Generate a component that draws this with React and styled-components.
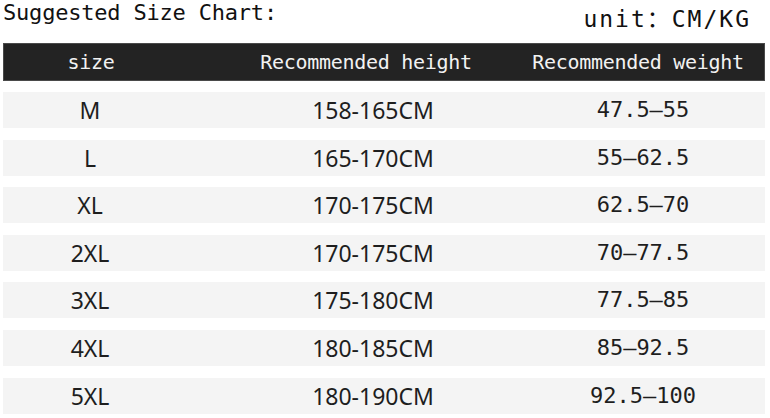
import React from 'react'
import styled, { createGlobalStyle } from 'styled-components'

const rows = [
  { size: 'M', height: '158-165CM', weight: '47.5—55' },
  { size: 'L', height: '165-170CM', weight: '55—62.5' },
  { size: 'XL', height: '170-175CM', weight: '62.5—70' },
  { size: '2XL', height: '170-175CM', weight: '70—77.5' },
  { size: '3XL', height: '175-180CM', weight: '77.5—85' },
  { size: '4XL', height: '180-185CM', weight: '85—92.5' },
  { size: '5XL', height: '180-190CM', weight: '92.5—100' },
]

const App = () => {
  return (
    <Page>
      <GlobalStyle />
      <TopBar>
        <Title>Suggested Size Chart:</Title>
        <Unit>unit：CM/KG</Unit>
      </TopBar>

      <Table>
        <HeaderRow>
          <HeadCell>size</HeadCell>
          <HeadCell $shift={58 - 16}>Recommended height</HeadCell>
          <HeadCell>Recommended weight</HeadCell>
        </HeaderRow>

        <Body>
          {rows.map(row => (
            <Row key={row.size}>
              <Cell>{row.size}</Cell>
              <Cell $shift={58}>{row.height}</Cell>
              <Cell $shift={10} $mono>
                {row.weight}
              </Cell>
            </Row>
          ))}
        </Body>
      </Table>
    </Page>
  )
}

export default App

const GlobalStyle = createGlobalStyle`
  html, body {
    margin: 0;
    padding: 0;
    background: #ffffff;
  }
`

const Page = styled.div`
  width: 770px;
  height: 418px;
  padding: 0 5px 0 3px;
  box-sizing: border-box;
  overflow: hidden;
  background: #ffffff;
`

const TopBar = styled.div`
  display: flex;
  justify-content: space-between;
  align-items: flex-start;
  height: 26px;
`

const Title = styled.h1`
  margin: 0;
  font-family: 'DejaVu Sans Mono', monospace;
  font-weight: normal;
  font-size: 22px;
  line-height: 26px;
  letter-spacing: -0.2px;
  color: #111;
`

const Unit = styled.div`
  margin-top: 6px;
  margin-right: 14px;
  font-family: 'DejaVu Sans Mono', 'Noto Sans CJK SC', monospace;
  font-size: 23px;
  line-height: 26px;
  letter-spacing: 2px;
  color: #111;
`

const Table = styled.div`
  margin-top: 17px;
  display: flex;
  flex-direction: column;
  gap: 11px;
`

const HeaderRow = styled.div`
  display: grid;
  grid-template-columns: 174px 334px 1fr;
  align-items: center;
  height: 38px;
  box-sizing: border-box;
  background: #232323;
  border: 1px solid #4a4a4a;
  color: #f2f2f2;
`

const HeadCell = styled.div`
  text-align: center;
  padding-left: ${p => p.$shift || 0}px;
  font-family: 'DejaVu Sans Mono', monospace;
  font-size: 20px;
  letter-spacing: -0.3px;
  line-height: 24px;
`

const Body = styled.div`
  display: grid;
  grid-auto-rows: 36px;
  row-gap: 11.6px;
`

const Row = styled.div`
  display: grid;
  grid-template-columns: 174px 334px 1fr;
  align-items: center;
  background: #f4f4f4;
  color: #1e1e1e;
`

const Cell = styled.div`
  text-align: center;
  padding-left: ${p => p.$shift || 0}px;
  font-family: ${p =>
    p.$mono ? "'DejaVu Sans Mono', monospace" : "'Noto Sans', sans-serif"};
  font-size: ${p => (p.$mono ? 22 : 23)}px;
  line-height: 30px;
`
